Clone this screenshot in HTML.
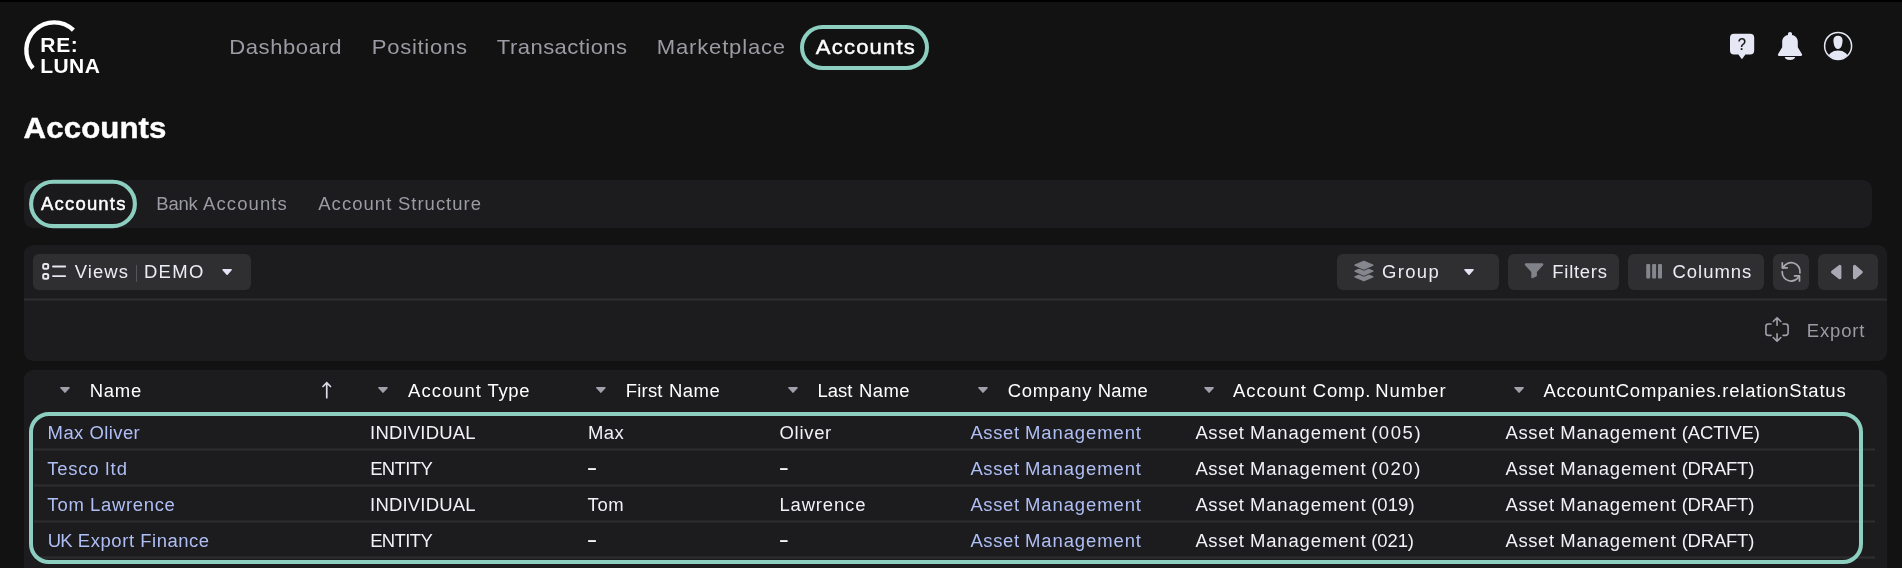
<!DOCTYPE html>
<html lang="en">
<head>
<meta charset="utf-8">
<title>Accounts</title>
<style>
*{box-sizing:border-box;margin:0;padding:0}
html,body{width:1902px;height:568px;overflow:hidden;background:#121212}
body{position:relative;font-family:"Liberation Sans",sans-serif;color:#fff}
.abs{position:absolute}
.t{position:absolute;display:block;white-space:nowrap;line-height:1;transform-origin:0 0;font-weight:400;text-decoration:none}
.topstrip{left:0;top:0;width:1902px;height:2px;background:#000}
.navpill{left:800px;top:25px;width:129px;height:45px;border:4px solid #8ccfc0;border-radius:23px}
.tabbar{left:24px;top:180px;width:1848px;height:48px;background:#1c1c1e;border-radius:9px}
.panel1{left:24px;top:245px;width:1863px;height:116px;background:#1c1c1e;border-radius:9px}
.divider{left:24px;top:298px;width:1863px;height:3px;background:linear-gradient(#252528 0 1px,#2e2e31 1px 2px,#252528 2px 3px)}
.btn{top:254px;height:36px;background:#2f2f32;border-radius:6px}
.panel2{left:24px;top:370px;width:1863px;height:198px;background:#1c1c1e;border-radius:9px 9px 0 0}
.rowline{left:34px;width:1841px;height:3px;background:linear-gradient(#252528 0 1px,#2e2e31 1px 2px,#252528 2px 3px)}
.sel{left:29px;top:412px;width:1834px;height:152px;border:4px solid #8ccfc0;border-radius:20px}
.vsep{left:136px;top:265px;width:1px;height:17px;background:#55555b}
</style>
</head>
<body>
<div class="abs topstrip"></div>

<!-- logo arc -->
<svg class="abs" style="left:20px;top:16px" width="64" height="60" viewBox="20 16 64 60">
  <path d="M 73.4 30.1 A 27.8 27.8 0 0 0 33.0 68.2" fill="none" stroke="#fff" stroke-width="4.4"/>
</svg>

<div class="abs navpill"></div>

<!-- top-right icons -->
<svg class="abs" style="left:1724px;top:26px" width="136" height="40" viewBox="1724 26 136 40">
  <!-- help bubble -->
  <path d="M1734 33.800 h16.200 a4 4 0 0 1 4 4 v12.700 a4 4 0 0 1 -4 4 h-4.800 l-3.100 4.300 q-0.400 0.500 -0.800 0 l-3.100 -4.300 h-4.400 a4 4 0 0 1 -4 -4 v-12.700 a4 4 0 0 1 4 -4 z" fill="#e6e7f5"/>
  <!-- bell -->
  <path d="M1788.0 33.6 a2 1.7 0 0 1 4 0 v1.5 c3.4 0.7 5.8 3.1 5.8 6.9 v5.2 l4.1 6.9 c0.5 0.9 0.1 1.8 -0.9 1.8 h-22 c-1 0 -1.400 -0.900 -0.900 -1.800 l4.100 -6.900 v-5.200 c0 -3.800 2.400 -6.200 5.800 -6.900 z" fill="#e6e7f5"/>
  <path d="M1784.8 57.1 h10.2 a5.1 2.800 0 0 1 -10.200 0 z" fill="#e6e7f5"/>
  <!-- user -->
  <circle cx="1838.1" cy="45.9" r="13.5" fill="none" stroke="#e6e7f5" stroke-width="1.5"/>
  <clipPath id="uc"><circle cx="1838.1" cy="45.9" r="13.2"/></clipPath>
  <g clip-path="url(#uc)" fill="#e6e7f5">
    <path d="M1838 35.8 c2.900 0 4.600 1.900 4.600 4.700 c0 1.600 -0.300 3.500 -0.900 5.300 c-0.600 1.900 -1.800 3.100 -3.700 3.100 c-1.900 0 -3.100 -1.200 -3.700 -3.100 c-0.600 -1.800 -0.900 -3.700 -0.900 -5.300 c0 -2.800 1.700 -4.700 4.600 -4.700 z"/>
    <ellipse cx="1838.1" cy="58.8" rx="10.6" ry="8.2"/>
  </g>
</svg>

<div class="abs tabbar"></div>
<svg class="abs" style="left:24px;top:174px" width="120" height="60" viewBox="24 174 120 60"><rect x="31.1" y="181.8" width="103.8" height="44.3" rx="22.15" fill="#1a1a1c" stroke="#8ccfc0" stroke-width="4.1"/></svg>

<div class="abs panel1"></div>
<div class="abs divider"></div>
<div class="abs btn" style="left:33px;width:218px"></div>
<div class="abs btn" style="left:1337px;width:162px"></div>
<div class="abs btn" style="left:1508px;width:111px"></div>
<div class="abs btn" style="left:1628px;width:136px"></div>
<div class="abs btn" style="left:1773px;width:36px"></div>
<div class="abs btn" style="left:1818px;width:60px"></div>
<div class="abs vsep"></div>

<!-- toolbar icons -->
<svg class="abs" style="left:24px;top:245px" width="1863" height="116" viewBox="24 245 1863 116">
  <!-- views icon -->
  <g fill="none" stroke="#e6e6f0">
    <rect x="43.2" y="264.0" width="5" height="4.800" rx="1.5" stroke-width="2"/>
    <rect x="43.2" y="273.9" width="5" height="4.800" rx="1.5" stroke-width="2"/>
    <path d="M53.0 266.5 H65.2 M53.0 276.1 H65.2" stroke-width="1.9" stroke-linecap="round"/>
  </g>
  <!-- layers icon -->
  <g stroke-linejoin="round">
    <path d="M1363.9 272.9 l8.9 3.9 l-8.9 3.9 l-8.9 -3.9 z" fill="#86868e" stroke="#86868e" stroke-width="1.4"/>
    <path d="M1363.9 267.2 l8.9 3.9 l-8.9 3.9 l-8.9 -3.9 z" fill="#86868e" stroke="#2f2f32" stroke-width="3.1"/>
    <path d="M1363.9 267.2 l8.9 3.9 l-8.9 3.9 l-8.9 -3.9 z" fill="#86868e" stroke="#86868e" stroke-width="1.4"/>
    <path d="M1363.9 261.3 l8.9 3.9 l-8.9 3.9 l-8.9 -3.9 z" fill="#86868e" stroke="#2f2f32" stroke-width="3.1"/>
    <path d="M1363.9 261.3 l8.9 3.9 l-8.9 3.9 l-8.9 -3.9 z" fill="#86868e" stroke="#86868e" stroke-width="1.4"/>
  </g>
  <!-- funnel -->
  <path d="M1526.000 263.300 H1542.200 c1.200 0 1.600 1.100 0.900 1.900 L1536.900 271.900 V275.600 c0 0.400 -0.200 0.700 -0.600 0.900 l-4.000 1.800 c-0.500 0.200 -1.000 -0.100 -1.000 -0.700 V271.900 L1525.100 265.200 c-0.700 -0.800 -0.300 -1.900 0.900 -1.900 z" fill="#818289"/>
  <!-- columns icon -->
  <g fill="#85858d">
    <rect x="1646.2" y="263.9" width="4" height="14.7" rx="1"/>
    <rect x="1652.1" y="263.9" width="4" height="14.7" rx="1"/>
    <rect x="1658.0" y="263.9" width="4" height="14.7" rx="1"/>
  </g>
  <!-- refresh -->
  <g fill="none" stroke="#a9a9b3" stroke-width="1.7" stroke-linecap="round" stroke-linejoin="round">
    <path d="M1783.0 268.0 A 8.9 8.9 0 0 1 1799.95 272.9"/>
    <path d="M1782.3 262.9 V267.8 H1787.2"/>
    <path d="M1782.2 271.7 A 8.9 8.9 0 0 0 1799.2 275.8"/>
    <path d="M1794.6 275.9 H1799.5 V280.9"/>
  </g>
  <!-- arrows -->
  <g fill="#a9a9b4" stroke="#a9a9b4" stroke-width="3.2" stroke-linejoin="round">
    <path d="M1839.800 266.500 V277.700 L1832.600 272.100 z"/>
    <path d="M1854.600 266.500 V277.700 L1861.200 272.100 z"/>
  </g>
  <!-- export icon -->
  <g fill="none" stroke="#a0a1aa" stroke-width="1.6" stroke-linecap="round" stroke-linejoin="round">
    <path d="M1771.000 324.050 H1768.400 a2.500 2.500 0 0 0 -2.500 2.500 V332.900 a2.500 2.500 0 0 0 2.500 2.500 H1771.000"/>
    <path d="M1783.100 324.050 H1785.600 a2.500 2.500 0 0 1 2.500 2.500 V332.900 a2.500 2.500 0 0 1 -2.500 2.500 H1783.100"/>
    <path d="M1777.050 325.300 V317.700 M1773.300 321.500 L1777.050 317.700 L1780.800 321.500"/>
    <path d="M1777.050 333.800 V341.300 M1773.300 337.500 L1777.050 341.300 L1780.800 337.500"/>
  </g>
</svg>

<div class="abs panel2"></div>
<svg class="abs" style="left:0;top:260px" width="1902" height="140" viewBox="0 260 1902 140">
  <g fill="#a0a1ab" stroke="#a0a1ab" stroke-width="1.6" stroke-linejoin="round"><path d="M61.00 387.70 H69.00 L65.00 392.05 z"/><path d="M379.00 387.70 H387.00 L383.00 392.05 z"/><path d="M596.90 387.70 H604.90 L600.90 392.05 z"/><path d="M789.00 387.70 H797.00 L793.00 392.05 z"/><path d="M979.00 387.70 H987.00 L983.00 392.05 z"/><path d="M1205.10 387.70 H1213.10 L1209.10 392.05 z"/><path d="M1515.10 387.70 H1523.10 L1519.10 392.05 z"/></g>
  <g fill="#e4e4f4" stroke="#e4e4f4" stroke-width="1.6" stroke-linejoin="round"><path d="M223.10 269.80 H231.10 L227.10 274.15 z"/><path d="M1465.00 269.80 H1473.00 L1469.00 274.15 z"/></g>
</svg>
<!-- sort arrow -->
<svg class="abs" style="left:318px;top:380px" width="18" height="22" viewBox="318 380 18 22">
  <path d="M326.750 397.700 V382.900 M323.000 386.500 L326.750 382.750 L330.500 386.500" fill="none" stroke="#dcdce8" stroke-width="1.7" stroke-linecap="round" stroke-linejoin="miter"/>
</svg>

<div class="abs rowline" style="top:448px"></div>
<div class="abs rowline" style="top:484px"></div>
<div class="abs rowline" style="top:520px"></div>
<div class="abs rowline" style="top:556px"></div>
<div class="abs sel"></div>


<div id="txt" style="position:absolute;left:0;top:0;width:1902px;height:568px;will-change:transform">
<div class="logo">
<div class="t" style="left:0;top:35.00px;font-size:20px;letter-spacing:0.591px;color:#ffffff;transform:translateX(40.37px) scaleX(1.05);font-weight:700;">RE:</div>
<div class="t" style="left:0;top:56.00px;font-size:20px;letter-spacing:0.353px;color:#ffffff;transform:translateX(40.37px) scaleX(1.05);font-weight:700;">LUNA</div>
</div>
<nav>
<a class="t" style="left:0;top:36.00px;font-size:21px;letter-spacing:0.525px;color:#9b9ba4;transform:translateX(229.33px) scaleX(1.05);">Dashboard</a>
<a class="t" style="left:0;top:36.00px;font-size:21px;letter-spacing:0.680px;color:#9b9ba4;transform:translateX(371.75px) scaleX(1.05);">Positions</a>
<a class="t" style="left:0;top:36.00px;font-size:21px;letter-spacing:0.416px;color:#9b9ba4;transform:translateX(496.86px) scaleX(1.05);">Transactions</a>
<a class="t" style="left:0;top:36.00px;font-size:21px;letter-spacing:0.785px;color:#9b9ba4;transform:translateX(656.75px) scaleX(1.05);">Marketplace</a>
<a class="t" style="left:0;top:36.00px;font-size:21px;letter-spacing:1.131px;color:#ffffff;transform:translateX(815.83px) scaleX(1.05);-webkit-text-stroke:0.42px #fff;">Accounts</a>
</nav>
<h1 class="t" style="left:0;top:113.00px;font-size:30px;letter-spacing:0.093px;color:#ffffff;transform:translateX(23.60px) scaleX(1.04);font-weight:700;-webkit-text-stroke:0.4px #fff;">Accounts</h1>
<div role="tablist">
<div class="t" role="tab" style="left:0;top:196.00px;font-size:17.6px;letter-spacing:1.128px;color:#ffffff;transform:translateX(41.10px) scaleX(1.05);-webkit-text-stroke:0.45px #fff;">Accounts</div>
<div class="t" role="tab" style="left:0;top:196.00px;font-size:17.6px;letter-spacing:-0.187px;color:#9b9ba4;transform:translateX(156.25px) scaleX(1.05);">Bank <span style="letter-spacing:1.046px;margin-left:0.55px">Accounts</span></div>
<div class="t" role="tab" style="left:0;top:196.00px;font-size:17.6px;letter-spacing:1.005px;color:#9b9ba4;transform:translateX(318.22px) scaleX(1.05);">Account <span style="letter-spacing:0.951px;margin-left:-0.52px">Structure</span></div>
</div>
<div role="toolbar">
<div class="t" style="left:0;top:264.00px;font-size:17.6px;letter-spacing:0.989px;color:#ececf4;transform:translateX(74.84px) scaleX(1.05);">Views</div>
<div class="t" style="left:0;top:264.00px;font-size:17.6px;letter-spacing:1.215px;color:#ececf4;transform:translateX(144.00px) scaleX(1.05);">DEMO</div>
<div class="t" style="left:0;top:264.00px;font-size:17.6px;letter-spacing:1.277px;color:#ececf4;transform:translateX(1382.00px) scaleX(1.05);">Group</div>
<div class="t" style="left:0;top:264.00px;font-size:17.6px;letter-spacing:0.688px;color:#ececf4;transform:translateX(1552.31px) scaleX(1.05);">Filters</div>
<div class="t" style="left:0;top:264.00px;font-size:17.6px;letter-spacing:0.928px;color:#ececf4;transform:translateX(1672.51px) scaleX(1.05);">Columns</div>
<div class="t" style="left:0;top:323.00px;font-size:17.6px;letter-spacing:0.798px;color:#9b9ba4;transform:translateX(1806.86px) scaleX(1.05);">Export</div>
</div>
<div role="table">
<div role="row">
<div class="t" role="columnheader" style="left:0;top:383.00px;font-size:17.6px;letter-spacing:0.708px;color:#ffffff;transform:translateX(89.67px) scaleX(1.05);">Name</div>
<div class="t" role="columnheader" style="left:0;top:383.00px;font-size:17.6px;letter-spacing:0.955px;color:#ffffff;transform:translateX(408.08px) scaleX(1.05);">Account <span style="letter-spacing:0.645px;margin-left:-0.47px">Type</span></div>
<div class="t" role="columnheader" style="left:0;top:383.00px;font-size:17.6px;letter-spacing:0.206px;color:#ffffff;transform:translateX(625.70px) scaleX(1.05);">First <span style="letter-spacing:0.504px;margin-left:0.86px">Name</span></div>
<div class="t" role="columnheader" style="left:0;top:383.00px;font-size:17.6px;letter-spacing:0.046px;color:#ffffff;transform:translateX(817.43px) scaleX(1.05);">Last <span style="letter-spacing:0.416px;margin-left:1.16px">Name</span></div>
<div class="t" role="columnheader" style="left:0;top:383.00px;font-size:17.6px;letter-spacing:0.760px;color:#ffffff;transform:translateX(1007.65px) scaleX(1.05);">Company <span style="letter-spacing:0.228px;margin-left:-0.47px">Name</span></div>
<div class="t" role="columnheader" style="left:0;top:383.00px;font-size:17.6px;letter-spacing:0.994px;color:#ffffff;transform:translateX(1232.96px) scaleX(1.05);">Account <span style="letter-spacing:0.741px;margin-left:-0.38px">Comp.</span> <span style="letter-spacing:0.893px;margin-left:-1.94px">Number</span></div>
<div class="t" role="columnheader" style="left:0;top:383.00px;font-size:17.6px;letter-spacing:0.760px;color:#ffffff;transform:translateX(1543.40px) scaleX(1.05);">AccountCompanies.relationStatus</div>
</div>
<div role="row">
<div class="t" role="cell" style="left:0;top:425.00px;font-size:17.6px;letter-spacing:0.409px;color:#afbff5;transform:translateX(47.60px) scaleX(1.05);">Max <span style="letter-spacing:0.359px;margin-left:0.22px">Oliver</span></div>
<div class="t" role="cell" style="left:0;top:425.00px;font-size:17.6px;letter-spacing:0.183px;color:#f1f1f6;transform:translateX(370.09px) scaleX(1.05);">INDIVIDUAL</div>
<div class="t" role="cell" style="left:0;top:425.00px;font-size:17.6px;letter-spacing:0.453px;color:#f1f1f6;transform:translateX(587.88px) scaleX(1.05);">Max</div>
<div class="t" role="cell" style="left:0;top:425.00px;font-size:17.6px;letter-spacing:0.669px;color:#f1f1f6;transform:translateX(779.52px) scaleX(1.05);">Oliver</div>
<div class="t" role="cell" style="left:0;top:425.00px;font-size:17.6px;letter-spacing:0.570px;color:#afbff5;transform:translateX(970.45px) scaleX(1.05);">Asset <span style="letter-spacing:0.854px;margin-left:-0.32px">Management</span></div>
<div class="t" role="cell" style="left:0;top:425.00px;font-size:17.6px;letter-spacing:0.575px;color:#f1f1f6;transform:translateX(1195.38px) scaleX(1.05);">Asset <span style="letter-spacing:0.825px;margin-left:-0.38px">Management</span> <span style="letter-spacing:1.487px;margin-left:-0.99px">(005)</span></div>
<div class="t" role="cell" style="left:0;top:425.00px;font-size:17.6px;letter-spacing:0.579px;color:#f1f1f6;transform:translateX(1505.53px) scaleX(1.05);">Asset <span style="letter-spacing:0.825px;margin-left:-0.36px">Management</span> <span style="letter-spacing:-0.093px;margin-left:-0.71px">(ACTIVE)</span></div>
</div>
<div role="row">
<div class="t" role="cell" style="left:0;top:461.00px;font-size:17.6px;letter-spacing:0.701px;color:#afbff5;transform:translateX(47.36px) scaleX(1.05);">Tesco <span style="letter-spacing:1.073px;margin-left:-0.03px">ltd</span></div>
<div class="t" role="cell" style="left:0;top:461.00px;font-size:17.6px;letter-spacing:-0.592px;color:#f1f1f6;transform:translateX(370.14px) scaleX(1.05);">ENTITY</div>
<div class="t" role="cell" style="left:0;top:455.00px;font-size:24px;letter-spacing:0.000px;color:#f1f1f6;transform:translateX(586.70px) scaleX(1.320405559984154);">-</div>
<div class="t" role="cell" style="left:0;top:455.00px;font-size:24px;letter-spacing:0.000px;color:#f1f1f6;transform:translateX(778.82px) scaleX(1.2685187415694663);">-</div>
<div class="t" role="cell" style="left:0;top:461.00px;font-size:17.6px;letter-spacing:0.570px;color:#afbff5;transform:translateX(970.45px) scaleX(1.05);">Asset <span style="letter-spacing:0.854px;margin-left:-0.32px">Management</span></div>
<div class="t" role="cell" style="left:0;top:461.00px;font-size:17.6px;letter-spacing:0.543px;color:#f1f1f6;transform:translateX(1195.38px) scaleX(1.05);">Asset <span style="letter-spacing:0.825px;margin-left:-0.19px">Management</span> <span style="letter-spacing:1.432px;margin-left:-0.96px">(020)</span></div>
<div class="t" role="cell" style="left:0;top:461.00px;font-size:17.6px;letter-spacing:0.556px;color:#f1f1f6;transform:translateX(1505.53px) scaleX(1.05);">Asset <span style="letter-spacing:0.825px;margin-left:-0.22px">Management</span> <span style="letter-spacing:-0.195px;margin-left:-0.68px">(DRAFT)</span></div>
</div>
<div role="row">
<div class="t" role="cell" style="left:0;top:497.00px;font-size:17.6px;letter-spacing:0.800px;color:#afbff5;transform:translateX(47.36px) scaleX(1.05);">Tom <span style="letter-spacing:0.644px;margin-left:-0.69px">Lawrence</span></div>
<div class="t" role="cell" style="left:0;top:497.00px;font-size:17.6px;letter-spacing:0.183px;color:#f1f1f6;transform:translateX(370.09px) scaleX(1.05);">INDIVIDUAL</div>
<div class="t" role="cell" style="left:0;top:497.00px;font-size:17.6px;letter-spacing:0.565px;color:#f1f1f6;transform:translateX(587.56px) scaleX(1.05);">Tom</div>
<div class="t" role="cell" style="left:0;top:497.00px;font-size:17.6px;letter-spacing:0.815px;color:#f1f1f6;transform:translateX(779.39px) scaleX(1.05);">Lawrence</div>
<div class="t" role="cell" style="left:0;top:497.00px;font-size:17.6px;letter-spacing:0.570px;color:#afbff5;transform:translateX(970.45px) scaleX(1.05);">Asset <span style="letter-spacing:0.854px;margin-left:-0.32px">Management</span></div>
<div class="t" role="cell" style="left:0;top:497.00px;font-size:17.6px;letter-spacing:0.575px;color:#f1f1f6;transform:translateX(1195.38px) scaleX(1.05);">Asset <span style="letter-spacing:0.825px;margin-left:-0.38px">Management</span> <span style="letter-spacing:0.059px;margin-left:-0.99px">(019)</span></div>
<div class="t" role="cell" style="left:0;top:497.00px;font-size:17.6px;letter-spacing:0.556px;color:#f1f1f6;transform:translateX(1505.53px) scaleX(1.05);">Asset <span style="letter-spacing:0.825px;margin-left:-0.22px">Management</span> <span style="letter-spacing:-0.195px;margin-left:-0.68px">(DRAFT)</span></div>
</div>
<div role="row">
<div class="t" role="cell" style="left:0;top:533.00px;font-size:17.6px;letter-spacing:-0.806px;color:#afbff5;transform:translateX(47.65px) scaleX(1.05);">UK <span style="letter-spacing:0.539px;margin-left:1.83px">Export</span> <span style="letter-spacing:0.494px;margin-left:1.25px">Finance</span></div>
<div class="t" role="cell" style="left:0;top:533.00px;font-size:17.6px;letter-spacing:-0.592px;color:#f1f1f6;transform:translateX(370.14px) scaleX(1.05);">ENTITY</div>
<div class="t" role="cell" style="left:0;top:527.00px;font-size:24px;letter-spacing:0.000px;color:#f1f1f6;transform:translateX(586.70px) scaleX(1.320405559984154);">-</div>
<div class="t" role="cell" style="left:0;top:527.00px;font-size:24px;letter-spacing:0.000px;color:#f1f1f6;transform:translateX(778.82px) scaleX(1.2685187415694663);">-</div>
<div class="t" role="cell" style="left:0;top:533.00px;font-size:17.6px;letter-spacing:0.570px;color:#afbff5;transform:translateX(970.45px) scaleX(1.05);">Asset <span style="letter-spacing:0.854px;margin-left:-0.32px">Management</span></div>
<div class="t" role="cell" style="left:0;top:533.00px;font-size:17.6px;letter-spacing:0.566px;color:#f1f1f6;transform:translateX(1195.38px) scaleX(1.05);">Asset <span style="letter-spacing:0.825px;margin-left:-0.33px">Management</span> <span style="letter-spacing:-0.069px;margin-left:-0.98px">(021)</span></div>
<div class="t" role="cell" style="left:0;top:533.00px;font-size:17.6px;letter-spacing:0.556px;color:#f1f1f6;transform:translateX(1505.53px) scaleX(1.05);">Asset <span style="letter-spacing:0.825px;margin-left:-0.22px">Management</span> <span style="letter-spacing:-0.195px;margin-left:-0.68px">(DRAFT)</span></div>
</div>
<div class="help">
<div class="t" style="left:0;top:36.00px;font-size:16.4px;letter-spacing:0.000px;color:#121212;transform:translateX(1737.80px) scaleX(0.8990701754980386);-webkit-text-stroke:0.2px #121212;">?</div>
</div>
</div>
</div>
</body>
</html>
